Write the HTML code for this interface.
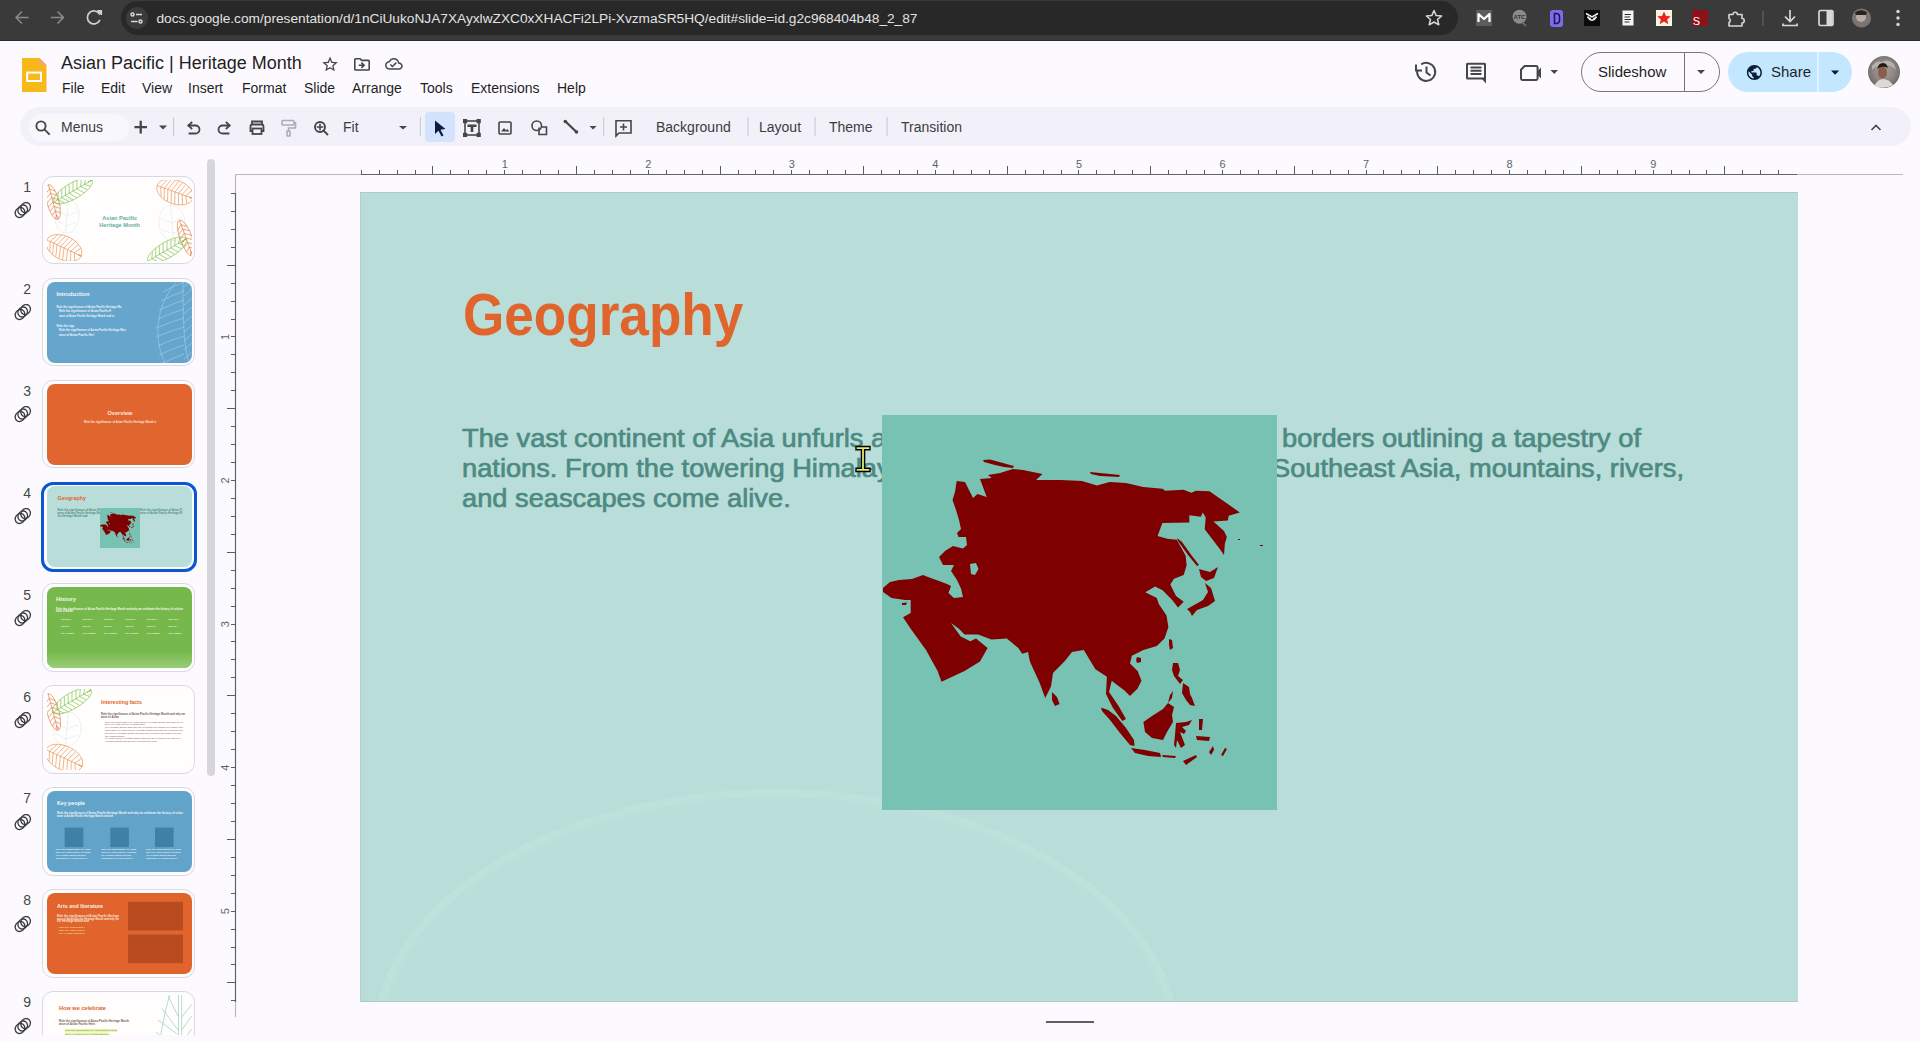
<!DOCTYPE html>
<html><head><meta charset="utf-8">
<style>
*{box-sizing:border-box;margin:0;padding:0}
html,body{width:1920px;height:1041px;overflow:hidden;background:#fcfaff;font-family:"Liberation Sans",sans-serif;position:relative}
.abs{position:absolute}
#chrome{left:0;top:0;width:1920px;height:41px;background:#3a3a3a}
#url{left:121px;top:1px;width:1337px;height:34px;border-radius:17px;background:#282828}
#urltext{left:156.5px;top:10.5px;font-size:13.7px;color:#e3e3e3;white-space:nowrap}
#hdr{left:0;top:41px;width:1920px;height:67px;background:#fcfaff}
.menu{top:80px;font-size:14px;color:#1f1f1f;white-space:nowrap}
#doctitle{left:61px;top:53px;font-size:18px;color:#1f1f1f;white-space:nowrap}
#toolbar{left:20px;top:107px;width:1891px;height:39px;border-radius:19.5px;background:#f2f1f9}
#search{left:29px;top:113.5px;width:100px;height:27.5px;border-radius:13px;background:#f8f7fc}
.tb{top:119px;font-size:14px;color:#3c3c3c;white-space:nowrap}
.sep{top:116px;width:1px;height:22px;background:#c7c7cc}
#slide{left:360px;top:192px;width:1438px;height:810px;background:#b9ddd8;overflow:hidden;border-top:1px solid #b2c9c8;border-bottom:1px solid #b2c9c8;border-left:1px solid #b9cccb}
#title{left:462.5px;top:279.5px;font-size:60px;font-weight:bold;color:#e0652c;white-space:nowrap;transform:scaleX(0.885);transform-origin:0 0}
.body{left:462px;font-size:25px;font-weight:normal;color:#4d8a83;white-space:nowrap;-webkit-text-stroke:0.65px #4d8a83;transform:scaleX(1.09);transform-origin:0 0}
#mapbox{left:882px;top:415px;width:395px;height:395px;background:#78c2b3}
.num{left:17px;font-size:14px;color:#444746;width:14px;text-align:right}
.thumb{left:43px;width:152px;height:87px;border-radius:10px;border:1px solid #dcdbe2;background:#fdfcff;overflow:hidden}
.thumb .in{position:absolute;left:3px;top:3px;right:3px;bottom:3px;border-radius:7px;overflow:hidden}
</style></head>
<body>
<div id="chrome" class="abs"></div><div class="abs" style="left:0;top:40px;width:1920px;height:1px;background:#2b2b2b"></div>
<div id="url" class="abs"></div>
<div id="urltext" class="abs">docs.google.com/presentation/d/1nCiUukoNJA7XAyxlwZXC0xXHACFi2LPi-XvzmaSR5HQ/edit#slide=id.g2c968404b48_2_87</div>

<div id="hdr" class="abs"></div>
<div id="doctitle" class="abs">Asian Pacific | Heritage Month</div>
<div class="abs menu" style="left:62px">File</div>
<div class="abs menu" style="left:101px">Edit</div>
<div class="abs menu" style="left:142px">View</div>
<div class="abs menu" style="left:188px">Insert</div>
<div class="abs menu" style="left:242px">Format</div>
<div class="abs menu" style="left:304px">Slide</div>
<div class="abs menu" style="left:352px">Arrange</div>
<div class="abs menu" style="left:420px">Tools</div>
<div class="abs menu" style="left:471px">Extensions</div>
<div class="abs menu" style="left:557px">Help</div>

<div id="toolbar" class="abs"></div>
<div id="search" class="abs"></div>
<svg class="abs" style="left:0;top:0" width="1920" height="1041" viewBox="0 0 1920 1041">
<!-- chrome nav -->
<g fill="none" stroke="#8a8a8a" stroke-width="1.6" stroke-linecap="round" stroke-linejoin="round">
<path d="M16.5,17.5H28M21.5,12L16,17.5L21.5,23"/>
<path d="M51.5,17.5H63M58,12L63.5,17.5L58,23"/>
</g>
<g fill="none" stroke="#d0d0d0" stroke-width="1.7" stroke-linecap="round">
<path d="M99.5,14.2A6.5,6.5 0 1 0 99.6,20.5"/>
</g>
<path d="M97.5,10.5L101.5,10.5L101.5,14.5Z" fill="#d0d0d0" stroke="#d0d0d0" stroke-width="1.2" stroke-linejoin="round"/>
<circle cx="137" cy="18" r="11" fill="#3b3b3b"/>
<g stroke="#d8d8d8" stroke-width="1.5" fill="none"><circle cx="132.5" cy="14.5" r="1.5"/><path d="M136,14.5H142"/><circle cx="140.5" cy="21.5" r="1.5"/><path d="M131,21.5H137.5"/></g>
<!-- chrome right -->
<path d="M1434,10.5L1436.2,15.6L1441.6,16L1437.5,19.5L1438.8,24.8L1434,22L1429.2,24.8L1430.5,19.5L1426.4,16L1431.8,15.6Z" fill="none" stroke="#d8d8d8" stroke-width="1.5" stroke-linejoin="round"/>
<rect x="1476" y="10" width="16" height="16" fill="#5d5d5d"/>
<path d="M1478.5,22V14L1484,19L1489.5,14V22" fill="none" stroke="#fff" stroke-width="2.2" stroke-linejoin="round"/>
<circle cx="1519.5" cy="16.8" r="7" fill="#8b8b8b"/><path d="M1522,22L1526,26" stroke="#777" stroke-width="1.5"/>
<text x="1519.5" y="19" font-size="6" fill="#333" text-anchor="middle" font-family="Liberation Sans" font-weight="bold">ATC</text>
<rect x="1550" y="10" width="13" height="17" rx="3" fill="#7d6cf0"/><path d="M1554.5,13.5V23.5H1556.5A3,3 0 0 0 1559.5,20.5V16.5A3,3 0 0 0 1556.5,13.5Z" fill="none" stroke="#1a1a4a" stroke-width="1.6"/>
<rect x="1584" y="10" width="16" height="16" fill="#0a0a0a"/><path d="M1586,13.5L1592,17L1598,13.5M1587.5,16.5Q1592,24 1596.5,16.5" fill="none" stroke="#f0f0f0" stroke-width="1.5"/><circle cx="1590" cy="18.5" r="1" fill="#f0f0f0"/><circle cx="1594" cy="18.5" r="1" fill="#f0f0f0"/>
<rect x="1622.5" y="10.5" width="11" height="15" fill="#f5f5f5"/><path d="M1624.5,14.5H1631M1624.5,17H1630M1624.5,19.5H1631M1624.5,22H1629.5" stroke="#333" stroke-width="1"/>
<rect x="1656" y="10" width="16" height="16" fill="#fbf6e4"/><path d="M1664,11.5L1666,16L1670.8,16.3L1667.2,19.4L1668.3,24.2L1664,21.6L1659.7,24.2L1660.8,19.4L1657.2,16.3L1662,16Z" fill="#e8231f"/>
<rect x="1692" y="10" width="16" height="16" fill="#8c1217"/><text x="1696.5" y="24.5" font-size="11" fill="#fff" text-anchor="middle" font-family="Liberation Sans">S</text>
<path d="M1729,14.5H1733A2.2,2.2 0 0 1 1737.4,14.5H1742V18.5A2.2,2.2 0 0 1 1742,23V26H1729V22.5A2.2,2.2 0 0 0 1729,18.5Z" fill="none" stroke="#d6d6d6" stroke-width="1.6" stroke-linejoin="round"/>
<path d="M1763,11V26" stroke="#6a6a6a" stroke-width="1"/>
<g fill="none" stroke="#d8d8d8" stroke-width="1.7"><path d="M1790,10V21M1785,16.5L1790,21.5L1795,16.5M1783,23.5V25.5H1797V23.5"/></g>
<rect x="1819" y="10.5" width="14" height="15" rx="1.5" fill="none" stroke="#d8d8d8" stroke-width="1.7"/><rect x="1826.5" y="11" width="6" height="14" fill="#d8d8d8"/>
<circle cx="1861.5" cy="18" r="9.5" fill="#7c7472"/><circle cx="1861" cy="17" r="5" fill="#b9aca4"/><path d="M1855,12.5Q1861,8 1867,12.5L1866,15L1856,15Z" fill="#2a2320"/>
<g fill="#d8d8d8"><circle cx="1898" cy="11.5" r="1.7"/><circle cx="1898" cy="18" r="1.7"/><circle cx="1898" cy="24.5" r="1.7"/></g>

<!-- slides logo -->
<path d="M22,58H39.5L46.5,65V92H22Z" fill="#f6b919"/>
<path d="M39.5,58L46.5,65H39.5Z" fill="#f1a37b"/>
<rect x="27.2" y="72.6" width="13.8" height="8.4" fill="none" stroke="#fff" stroke-width="2"/>
<!-- star / folder / cloud -->
<path transform="translate(320.75,55.05) scale(0.775)" fill="#444746" d="M22 9.24l-7.19-.62L12 2 9.19 8.63 2 9.24l5.46 4.73L5.82 21 12 17.27 18.18 21l-1.63-7.03L22 9.24zM12 15.4l-3.76 2.27 1-4.28-3.32-2.88 4.38-.38L12 6.1l1.71 4.04 4.38.38-3.32 2.88 1 4.28L12 15.4z"/>
<path transform="translate(352.4,54.8) scale(0.8)" fill="#444746" d="M20 6h-8l-2-2H4c-1.1 0-1.99.9-1.99 2L2 18c0 1.1.9 2 2 2h16c1.1 0 2-.9 2-2V8c0-1.1-.9-2-2-2zm0 12H4V6h5.17l2 2H20v10zm-7.84-6H8v2h4.16l-1.59 1.59L11.99 17 16 13.01 11.99 9l-1.41 1.41L12.160 12z"/>
<path transform="translate(385,55) scale(0.74)" fill="#444746" d="M19.35 10.04C18.67 6.59 15.64 4 12 4 9.11 4 6.6 5.64 5.35 8.04 2.34 8.360 0 10.91 0 14c0 3.31 2.69 6 6 6h13c2.76 0 5-2.24 5-5 0-2.64-2.05-4.78-4.65-4.96zM19 18H6c-2.21 0-4-1.79-4-4 0-2.05 1.53-3.76 3.56-3.970l1.07-.11.5-.95C8.08 7.14 9.94 6 12 6c2.62 0 4.88 1.86 5.39 4.43l.3 1.5 1.53.11c1.56.1 2.78 1.41 2.78 2.96 0 1.65-1.35 3-3 3zm-9-3.82l-2.09-2.09L6.5 13.5 10 17l6.01-6.01-1.41-1.41z"/>

<!-- header right -->
<g fill="none" stroke="#444746" stroke-width="2">
<path d="M1417.3,70.5A9,9 0 1 0 1421.2,64.4"/>
<path d="M1426.5,66.5V72.5L1430.5,75.5"/>
<rect x="1467" y="63.8" width="18" height="14.6" rx="0.5"/>
<path d="M1470.5,67.5H1481.5M1470.5,70.8H1481.5M1470.5,74.1H1481.5"/>
<path d="M1521,69.8L1524.5,66H1536.2Q1537.6,66 1537.6,67.4V78.6Q1537.6,80 1536.2,80H1522.4Q1521,80 1521,78.6Z"/>
</g>
<path d="M1416,64.5V70.5H1422" fill="none" stroke="#444746" stroke-width="2"/>
<path d="M1484,78L1486,78V83.5L1481,78Z" fill="#444746"/>
<path d="M1537.6,71L1541,67.5V78.5L1537.6,75Z" fill="#444746"/>
<path d="M1550.5,70H1558L1554.25,74Z" fill="#444746"/>
<!-- slideshow -->
<rect x="1581.5" y="52.5" width="138" height="39" rx="19.5" fill="none" stroke="#747775" stroke-width="1"/>
<path d="M1684.5,52.5V91.5" stroke="#747775" stroke-width="1"/>
<path d="M1697,70H1705L1701,74Z" fill="#444746"/>
<!-- share -->
<rect x="1728" y="52" width="124" height="40" rx="20" fill="#c2e7ff"/>
<path d="M1818,52V92" stroke="#f7f9fd" stroke-width="1.2"/>
<path transform="translate(1745.4,63.5) scale(0.75)" fill="#0b1d33" d="M12 2C6.48 2 2 6.480 2 12s4.48 10 10 10 10-4.48 10-10S17.52 2 12 2zm-1 17.93c-3.95-.49-7-3.85-7-7.93 0-.62.08-1.21.21-1.79L9 15v1c0 1.1.9 2 2 2v1.93zm6.9-2.54c-.26-.81-1-1.39-1.9-1.39h-1v-3c0-.55-.45-1-1-1H8v-2h2c.55 0 1-.45 1-1V7h2c1.1 0 2-.9 2-2v-.41c2.93 1.19 5 4.06 5 7.41 0 2.08-.8 3.970-2.1 5.39z"/>
<path d="M1831,70.6H1839.2L1835.1,74.8Z" fill="#0b1d33"/>
<!-- avatar -->
<defs><radialGradient id="av" cx="50%" cy="45%" r="55%"><stop offset="0" stop-color="#a9a29d"/><stop offset="0.6" stop-color="#8d8682"/><stop offset="1" stop-color="#6e6864"/></radialGradient></defs>
<circle cx="1884" cy="72" r="16" fill="url(#av)"/>
<path d="M1872,66Q1876,60 1882,62Q1888,58 1894,64L1896,70Q1890,64 1884,66Q1878,64 1872,70Z" fill="#c8c3bf" opacity="0.7"/>
<ellipse cx="1882.5" cy="72.5" rx="4.5" ry="6" fill="#8a5e4c"/>
<path d="M1877.5,69Q1878,63 1883,63Q1888,63.5 1887.5,68.5L1886,67Q1882,66 1879,68Z" fill="#231c1a"/>
<path d="M1874,86Q1878,79 1883,79Q1889,79 1893,85Q1884,90 1874,86Z" fill="#dcd8d4"/>
<!-- toolbar -->
<g fill="none" stroke="#444746" stroke-width="1.9" stroke-linecap="square">
<circle cx="41" cy="126" r="4.6"/><path d="M44.6,129.6L49,134"/>
<path d="M140.7,122V132.3M135.6,127.2H145.8" stroke-width="2.3"/>
<path d="M188.5,125.5H195.5A4,4 0 0 1 195.5,133.5H189.5" stroke-width="1.8"/>
<path d="M191.5,122.5L188.5,125.5L191.5,128.5" stroke-width="1.8"/>
<path d="M229.5,125.5H222.5A4,4 0 0 0 222.5,133.5H228.5" stroke-width="1.8"/>
<path d="M226.5,122.5L229.5,125.5L226.5,128.5" stroke-width="1.8"/>
<circle cx="320" cy="127" r="5"/><path d="M323.7,130.7L327.3,134.3"/><path d="M320,124.5V129.5M317.5,127H322.5" stroke-width="1.6"/>
</g>
<path d="M159,125.5H167L163,129.5Z" fill="#444746"/>
<path d="M173.6,117.5V136" stroke="#c4c7c5" stroke-width="1"/>
<g fill="none" stroke="#444746" stroke-width="1.8"><path d="M252,124.5V121.5H262V124.5"/><path d="M252.5,131H250.5V126.5Q250.5,124.5 252.5,124.5H261.5Q263.5,124.5 263.5,126.5V131H261.5"/><rect x="252.5" y="128.5" width="9" height="5.5"/></g>
<g fill="none" stroke="#a9acb0" stroke-width="1.6"><rect x="282" y="120.5" width="12" height="4.5" rx="0.8"/><path d="M294,122.8H295.5V128H288.5V131"/><rect x="287" y="131" width="3" height="5" rx="0.5"/></g>
<path d="M399,126H407L403,129.5Z" fill="#444746"/>
<path d="M420.4,117V136" stroke="#c4c7c5" stroke-width="1"/>
<rect x="425" y="112" width="30" height="30" rx="4" fill="#d3e3fd"/>
<path d="M435,120.5L445.5,129L440.5,129.8L443.5,135.5L441.5,136.5L438.5,130.8L435,134Z" fill="#0b1d45"/>
<g fill="none" stroke="#444746" stroke-width="1.6">
<rect x="465" y="121" width="14" height="14"/>
<rect x="532" y="121" width="9.5" height="9.5" rx="4.75"/>
<path d="M539,127.5V134.5H546.5V127H541.5"/>
<rect x="499" y="122" width="12" height="12" rx="1"/>
<path d="M616,120.8H631V133H619L616,136Z"/>
<path d="M623.5,123.5V130.5M620,127H627"/>
</g>
<g fill="#444746"><rect x="463" y="119" width="4.2" height="4.2"/><rect x="476.6" y="119" width="4.2" height="4.2"/><rect x="463" y="132.8" width="4.2" height="4.2"/><rect x="476.6" y="132.8" width="4.2" height="4.2"/>
<path d="M467.5,124.5H476.5V127H473.3V132H470.7V127H467.5Z"/>
<path d="M501,131.5L504,128L506,130.3L507.3,129L509.5,131.5Z"/>
</g>
<path d="M565.5,121.5L576.5,132" stroke="#444746" stroke-width="2.3"/>
<circle cx="565.3" cy="121.5" r="1.8" fill="#444746"/><circle cx="576.5" cy="132" r="1.8" fill="#444746"/>
<path d="M589.5,126H596.6L593,129.5Z" fill="#444746"/>
<path d="M603.7,117V136" stroke="#c4c7c5" stroke-width="1"/>
<path d="M748,117V136M815,117V136M887,117V136" stroke="#c4c7c5" stroke-width="1"/>
<path d="M1871.5,130L1876,125.5L1880.5,130" fill="none" stroke="#444746" stroke-width="1.6"/>
</svg>

<div class="abs tb" style="left:61px">Menus</div>
<div class="abs tb" style="left:343px">Fit</div>
<div class="abs tb" style="left:656px">Background</div>
<div class="abs tb" style="left:759px">Layout</div>
<div class="abs tb" style="left:829px">Theme</div>
<div class="abs tb" style="left:901px">Transition</div>

<!-- rulers -->
<svg class="abs" style="left:0;top:0" width="1920" height="1041">
<path d="M361,174.5H1797M235.5,193V1002" stroke="#606368" stroke-width="1.2" fill="none"/><path d="M235.5,1002V1017" stroke="#b9b9c0" stroke-width="1.2" fill="none"/>
<path d="M235,174.5H361M235.5,174V193" stroke="#b9b9c0" stroke-width="1.2" fill="none"/>
<path d="M1797,174.5H1903" stroke="#b8b8c0" stroke-width="1.2" fill="none"/>
<path d="M361.5,170V175M379.5,170V175M397.5,170V175M415.5,170V175M432.5,166V175M450.5,170V175M468.5,170V175M486.5,170V175M504.5,170V175M522.5,170V175M540.5,170V175M558.5,170V175M576.5,166V175M594.5,170V175M612.5,170V175M630.5,170V175M648.5,170V175M666.5,170V175M684.5,170V175M702.5,170V175M720.5,166V175M738.5,170V175M755.5,170V175M773.5,170V175M791.5,170V175M809.5,170V175M827.5,170V175M845.5,170V175M863.5,166V175M881.5,170V175M899.5,170V175M917.5,170V175M935.5,170V175M953.5,170V175M971.5,170V175M989.5,170V175M1007.5,166V175M1025.5,170V175M1043.5,170V175M1061.5,170V175M1078.5,170V175M1096.5,170V175M1114.5,170V175M1132.5,170V175M1150.5,166V175M1168.5,170V175M1186.5,170V175M1204.5,170V175M1222.5,170V175M1240.5,170V175M1258.5,170V175M1276.5,170V175M1294.5,166V175M1312.5,170V175M1330.5,170V175M1348.5,170V175M1366.5,170V175M1383.5,170V175M1401.5,170V175M1419.5,170V175M1437.5,166V175M1455.5,170V175M1473.5,170V175M1491.5,170V175M1509.5,170V175M1527.5,170V175M1545.5,170V175M1563.5,170V175M1581.5,166V175M1599.5,170V175M1617.5,170V175M1635.5,170V175M1653.5,170V175M1671.5,170V175M1689.5,170V175M1706.5,170V175M1724.5,166V175M1742.5,170V175M1760.5,170V175M1778.5,170V175" stroke="#5a5d62" stroke-width="1" fill="none"/>
<path d="M231,193.5H236M231,211.5H236M231,229.5H236M231,247.5H236M227,265.5H236M231,283.5H236M231,301.5H236M231,319.5H236M231,336.5H236M231,354.5H236M231,372.5H236M231,390.5H236M227,408.5H236M231,426.5H236M231,444.5H236M231,462.5H236M231,480.5H236M231,498.5H236M231,516.5H236M231,534.5H236M227,552.5H236M231,570.5H236M231,588.5H236M231,606.5H236M231,624.5H236M231,641.5H236M231,659.5H236M231,677.5H236M227,695.5H236M231,713.5H236M231,731.5H236M231,749.5H236M231,767.5H236M231,785.5H236M231,803.5H236M231,821.5H236M227,839.5H236M231,857.5H236M231,875.5H236M231,893.5H236M231,911.5H236M231,929.5H236M231,947.5H236M231,964.5H236M227,982.5H236M231,1000.5H236" stroke="#5a5d62" stroke-width="1" fill="none"/>
<g font-family="Liberation Sans" font-size="11" fill="#5f6368" text-anchor="middle"><text x="504.8" y="168">1</text><text x="648.3" y="168">2</text><text x="791.9" y="168">3</text><text x="935.4" y="168">4</text><text x="1079.0" y="168">5</text><text x="1222.5" y="168">6</text><text x="1366.1" y="168">7</text><text x="1509.6" y="168">8</text><text x="1653.2" y="168">9</text><text transform="translate(229,337.0) rotate(-90)" x="0" y="0">1</text><text transform="translate(229,480.5) rotate(-90)" x="0" y="0">2</text><text transform="translate(229,624.1) rotate(-90)" x="0" y="0">3</text><text transform="translate(229,767.6) rotate(-90)" x="0" y="0">4</text><text transform="translate(229,911.1) rotate(-90)" x="0" y="0">5</text></g>
</svg>

<div class="abs" style="left:0;top:150px;width:200px;height:885px;overflow:hidden"><div class="abs" style="left:0;top:-150px;width:200px;height:1041px"><div class="abs num" style="top:178.7px">1</div><svg class="abs" style="left:13px;top:202.1px" width="20" height="18" viewBox="0 0 20 18"><g fill="none" stroke="#3c3c3c" stroke-width="1.3"><ellipse cx="7" cy="10.5" rx="4.6" ry="5.2" transform="rotate(35 7 10.5)"/><ellipse cx="9.7" cy="8" rx="4.6" ry="5.2" transform="rotate(35 9.7 8)"/><ellipse cx="12.6" cy="5.5" rx="4.6" ry="5.2" transform="rotate(35 12.6 5.5)"/></g></svg><div class="abs" style="left:42.4px;top:175.6px;width:152.5px;height:88.5px;border:1px solid #dad9e0;border-radius:11px;background:#fdfcff"></div><svg class="abs" style="left:46.5px;top:179.6px" width="145" height="81" viewBox="0 0 145 81"><clipPath id="c0"><rect width="145" height="81" rx="8"/></clipPath><g clip-path="url(#c0)"><rect width="145" height="81" fill="#fffefd"/><g transform="rotate(5 20 36)" fill="none" stroke="#a9c8d6" stroke-width="0.5" stroke-dasharray="0.6 0.7"><ellipse cx="20" cy="36" rx="12" ry="17"/><path d="M20,19V53M10.399999999999999,30.9L20,36L29.6,30.9M10.399999999999999,41.1L20,46.2L29.6,41.1"/></g><g transform="rotate(-5 125 43)" fill="none" stroke="#a9c8d6" stroke-width="0.5" stroke-dasharray="0.6 0.7"><ellipse cx="125" cy="43" rx="13" ry="18"/><path d="M125,25V61M114.6,37.6L125,43L135.4,37.6M114.6,48.4L125,53.8L135.4,48.4"/></g><g transform="translate(6,22) rotate(75)" stroke="#e07a44" fill="none" stroke-width="0.6"><ellipse cx="0" cy="0" rx="18" ry="6"/><path d="M-18,0H18"/><path d="M-13.5,0L-9.9,-4.9M-13.5,0L-9.9,4.9M-9.0,0L-5.4,-5.6M-9.0,0L-5.4,5.6M-4.5,0L-0.9,-5.8M-4.5,0L-0.9,5.8M0.0,0L3.6,-5.7M0.0,0L3.6,5.7M4.5,0L8.1,-5.2M4.5,0L8.1,5.2M9.0,0L12.6,-4.2M9.0,0L12.6,4.2M13.5,0L17.1,-1.8M13.5,0L17.1,1.8"/></g><g transform="translate(26,11) rotate(-30)" stroke="#7cc04a" fill="none" stroke-width="0.6"><ellipse cx="0" cy="0" rx="22" ry="8"/><path d="M-22,0H22"/><path d="M-17.6,0L-13.2,-6.2M-17.6,0L-13.2,6.2M-13.2,0L-8.8,-7.1M-13.2,0L-8.8,7.1M-8.8,0L-4.4,-7.6M-8.8,0L-4.4,7.6M-4.4,0L0.0,-7.8M-4.4,0L0.0,7.8M0.0,0L4.4,-7.6M0.0,0L4.4,7.6M4.4,0L8.8,-7.1M4.4,0L8.8,7.1M8.8,0L13.2,-6.2M8.8,0L13.2,6.2M13.2,0L17.6,-4.7M13.2,0L17.6,4.7M17.6,0L22.0,-0.0M17.6,0L22.0,0.0"/></g><g transform="translate(17,68) rotate(25)" stroke="#e8904e" fill="none" stroke-width="0.6"><ellipse cx="0" cy="0" rx="19" ry="12"/><path d="M-19,0H19"/><path d="M-15.2,0L-11.4,-9.3M-15.2,0L-11.4,9.3M-11.4,0L-7.6,-10.7M-11.4,0L-7.6,10.7M-7.6,0L-3.8,-11.4M-7.6,0L-3.8,11.4M-3.8,0L-0.0,-11.6M-3.8,0L-0.0,11.6M0.0,0L3.8,-11.4M0.0,0L3.8,11.4M3.8,0L7.6,-10.7M3.8,0L7.6,10.7M7.6,0L11.4,-9.3M7.6,0L11.4,9.3M11.4,0L15.2,-7.0M11.4,0L15.2,7.0M15.2,0L19.0,-0.0M15.2,0L19.0,0.0"/></g><g transform="translate(128,12) rotate(20)" stroke="#e8904e" fill="none" stroke-width="0.6"><ellipse cx="0" cy="0" rx="19" ry="12"/><path d="M-19,0H19"/><path d="M-15.2,0L-11.4,-9.3M-15.2,0L-11.4,9.3M-11.4,0L-7.6,-10.7M-11.4,0L-7.6,10.7M-7.6,0L-3.8,-11.4M-7.6,0L-3.8,11.4M-3.8,0L-0.0,-11.6M-3.8,0L-0.0,11.6M0.0,0L3.8,-11.4M0.0,0L3.8,11.4M3.8,0L7.6,-10.7M3.8,0L7.6,10.7M7.6,0L11.4,-9.3M7.6,0L11.4,9.3M11.4,0L15.2,-7.0M11.4,0L15.2,7.0M15.2,0L19.0,-0.0M15.2,0L19.0,0.0"/></g><g transform="translate(139,58) rotate(70)" stroke="#e07a44" fill="none" stroke-width="0.6"><ellipse cx="0" cy="0" rx="19" ry="6"/><path d="M-19,0H19"/><path d="M-14.2,0L-10.4,-4.9M-14.2,0L-10.4,4.9M-9.5,0L-5.7,-5.6M-9.5,0L-5.7,5.6M-4.8,0L-0.9,-5.8M-4.8,0L-0.9,5.8M0.0,0L3.8,-5.7M0.0,0L3.8,5.7M4.8,0L8.6,-5.2M4.8,0L8.6,5.2M9.5,0L13.3,-4.2M9.5,0L13.3,4.2M14.2,0L18.1,-1.8M14.2,0L18.1,1.8"/></g><g transform="translate(120,70) rotate(-30)" stroke="#7cc04a" fill="none" stroke-width="0.6"><ellipse cx="0" cy="0" rx="22" ry="8"/><path d="M-22,0H22"/><path d="M-17.6,0L-13.2,-6.2M-17.6,0L-13.2,6.2M-13.2,0L-8.8,-7.1M-13.2,0L-8.8,7.1M-8.8,0L-4.4,-7.6M-8.8,0L-4.4,7.6M-4.4,0L0.0,-7.8M-4.4,0L0.0,7.8M0.0,0L4.4,-7.6M0.0,0L4.4,7.6M4.4,0L8.8,-7.1M4.4,0L8.8,7.1M8.8,0L13.2,-6.2M8.8,0L13.2,6.2M13.2,0L17.6,-4.7M13.2,0L17.6,4.7M17.6,0L22.0,-0.0M17.6,0L22.0,0.0"/></g><text x="72.7" y="39.5" font-size="5.6" fill="#62ae9f" text-anchor="middle" font-family="Liberation Sans" font-weight="bold">Asian Pacific</text><text x="72.7" y="46.5" font-size="5.6" fill="#62ae9f" text-anchor="middle" font-family="Liberation Sans" font-weight="bold">Heritage Month</text></g></svg><div class="abs num" style="top:280.7px">2</div><svg class="abs" style="left:13px;top:304.1px" width="20" height="18" viewBox="0 0 20 18"><g fill="none" stroke="#3c3c3c" stroke-width="1.3"><ellipse cx="7" cy="10.5" rx="4.6" ry="5.2" transform="rotate(35 7 10.5)"/><ellipse cx="9.7" cy="8" rx="4.6" ry="5.2" transform="rotate(35 9.7 8)"/><ellipse cx="12.6" cy="5.5" rx="4.6" ry="5.2" transform="rotate(35 12.6 5.5)"/></g></svg><div class="abs" style="left:42.4px;top:277.6px;width:152.5px;height:88.5px;border:1px solid #dad9e0;border-radius:11px;background:#fdfcff"></div><svg class="abs" style="left:46.5px;top:281.6px" width="145" height="81" viewBox="0 0 145 81"><clipPath id="c1"><rect width="145" height="81" rx="8"/></clipPath><g clip-path="url(#c1)"><rect width="145" height="81" fill="#66a5cc"/><text x="9.5" y="13.7" font-size="5" fill="#f4f8fb" font-family="Liberation Sans" font-weight="bold" textLength="33" lengthAdjust="spacingAndGlyphs">Introduction</text><text x="9.5" y="25.5" font-size="2.6" fill="#eef5fa" opacity="1" font-family="Liberation Sans" font-weight="bold" textLength="65" lengthAdjust="spacingAndGlyphs">Role the significance of Asian Pacific Heritage Mo</text><text x="12" y="30.0" font-size="2.6" fill="#eef5fa" opacity="1" font-family="Liberation Sans" font-weight="bold" textLength="52" lengthAdjust="spacingAndGlyphs">Role the significance of Asian Pacific H</text><text x="12" y="34.5" font-size="2.6" fill="#eef5fa" opacity="1" font-family="Liberation Sans" font-weight="bold" textLength="55" lengthAdjust="spacingAndGlyphs">ance of Asian Pacific Heritage Month and w</text><text x="9.5" y="44.5" font-size="2.6" fill="#eef5fa" opacity="1" font-family="Liberation Sans" font-weight="bold" textLength="18" lengthAdjust="spacingAndGlyphs">Role the sign</text><text x="12" y="49.0" font-size="2.6" fill="#eef5fa" opacity="1" font-family="Liberation Sans" font-weight="bold" textLength="67" lengthAdjust="spacingAndGlyphs">Role the significance of Asian Pacific Heritage Mon</text><text x="12" y="53.5" font-size="2.6" fill="#eef5fa" opacity="1" font-family="Liberation Sans" font-weight="bold" textLength="35" lengthAdjust="spacingAndGlyphs">ance of Asian Pacific Heri</text><g stroke="#a6d0f0" stroke-width="0.6" fill="none"><path d="M130,-1C112,20 104,50 118,82"/><path d="M136,-1C136,30 136,60 142,82"/><path d="M116,10Q127,4 137,0"/><path d="M137,5L146,-3"/><path d="M114,19Q126,13 137,9"/><path d="M137,14L146,6"/><path d="M112,28Q125,22 137,18"/><path d="M137,23L146,15"/><path d="M111,37Q124,31 137,27"/><path d="M137,32L146,24"/><path d="M109,46Q123,40 137,36"/><path d="M137,41L146,33"/><path d="M109,55Q123,49 137,45"/><path d="M137,50L146,42"/><path d="M111,64Q124,58 137,54"/><path d="M137,59L146,51"/><path d="M112,73Q125,67 137,63"/><path d="M137,68L146,60"/><path d="M114,82Q126,76 137,72"/><path d="M137,77L146,69"/></g></g></svg><div class="abs num" style="top:382.6px">3</div><svg class="abs" style="left:13px;top:406.0px" width="20" height="18" viewBox="0 0 20 18"><g fill="none" stroke="#3c3c3c" stroke-width="1.3"><ellipse cx="7" cy="10.5" rx="4.6" ry="5.2" transform="rotate(35 7 10.5)"/><ellipse cx="9.7" cy="8" rx="4.6" ry="5.2" transform="rotate(35 9.7 8)"/><ellipse cx="12.6" cy="5.5" rx="4.6" ry="5.2" transform="rotate(35 12.6 5.5)"/></g></svg><div class="abs" style="left:42.4px;top:379.5px;width:152.5px;height:88.5px;border:1px solid #dad9e0;border-radius:11px;background:#fdfcff"></div><svg class="abs" style="left:46.5px;top:383.5px" width="145" height="81" viewBox="0 0 145 81"><clipPath id="c2"><rect width="145" height="81" rx="8"/></clipPath><g clip-path="url(#c2)"><rect width="145" height="81" fill="#e0652f"/><text x="73" y="31" font-size="4.8" fill="#fbe8de" text-anchor="middle" font-family="Liberation Sans" font-weight="bold" textLength="25" lengthAdjust="spacingAndGlyphs">Overview</text><text x="37" y="38.5" font-size="2.6" fill="#fbe3d6" opacity="1" font-family="Liberation Sans" font-weight="bold" textLength="72" lengthAdjust="spacingAndGlyphs">Role the significance of Asian Pacific Heritage Month a</text></g></svg><div class="abs num" style="top:484.6px">4</div><svg class="abs" style="left:13px;top:508.0px" width="20" height="18" viewBox="0 0 20 18"><g fill="none" stroke="#3c3c3c" stroke-width="1.3"><ellipse cx="7" cy="10.5" rx="4.6" ry="5.2" transform="rotate(35 7 10.5)"/><ellipse cx="9.7" cy="8" rx="4.6" ry="5.2" transform="rotate(35 9.7 8)"/><ellipse cx="12.6" cy="5.5" rx="4.6" ry="5.2" transform="rotate(35 12.6 5.5)"/></g></svg><div class="abs" style="left:41px;top:481.5px;width:156px;height:90px;border:3px solid #0b57d0;border-radius:12px"></div><svg class="abs" style="left:46.5px;top:485.5px" width="145" height="81" viewBox="0 0 145 81"><clipPath id="c3"><rect width="145" height="81" rx="8"/></clipPath><g clip-path="url(#c3)"><rect width="145" height="81" fill="#b9ddd8"/><text x="10.5" y="14" font-size="5.4" fill="#e0652c" font-family="Liberation Sans" font-weight="bold" textLength="28.5" lengthAdjust="spacingAndGlyphs">Geography</text><text x="10.5" y="25" font-size="2.6" fill="#4e8c84" opacity="1" font-family="Liberation Sans" font-weight="bold" textLength="43" lengthAdjust="spacingAndGlyphs">Role the significance of Asian Pa</text><text x="10.5" y="28" font-size="2.6" fill="#4e8c84" opacity="1" font-family="Liberation Sans" font-weight="bold" textLength="43" lengthAdjust="spacingAndGlyphs">ance of Asian Pacific Heritage Mo</text><text x="10.5" y="31" font-size="2.6" fill="#4e8c84" opacity="1" font-family="Liberation Sans" font-weight="bold" textLength="30" lengthAdjust="spacingAndGlyphs">ific Heritage Month and</text><text x="93" y="25" font-size="2.6" fill="#4e8c84" opacity="1" font-family="Liberation Sans" font-weight="bold" textLength="42" lengthAdjust="spacingAndGlyphs">Role the significance of Asian P</text><text x="93" y="28" font-size="2.6" fill="#4e8c84" opacity="1" font-family="Liberation Sans" font-weight="bold" textLength="42" lengthAdjust="spacingAndGlyphs">ance of Asian Pacific Heritage M</text><rect x="53" y="22" width="40" height="40" fill="#78c2b3"/><g transform="translate(53,22) scale(0.1013) translate(-882,-415)" fill="#7f0000"><path fill-rule="evenodd" d="M883.0,588.0 L890.0,582.0 L899.0,580.0 L912.0,579.0 L923.0,575.0 L928.0,577.0 L939.0,581.0 L947.0,584.0 L951.0,586.0 L948.5,593.0 L954.0,598.0 L963.0,597.0 L961.0,588.5 L957.0,580.0 L951.0,571.0 L954.0,565.0 L943.0,565.0 L939.0,557.0 L945.0,551.0 L953.0,546.0 L963.0,548.5 L967.0,545.0 L966.0,537.0 L958.5,537.0 L957.0,533.0 L961.0,529.0 L959.0,520.0 L956.0,510.0 L952.5,500.0 L955.0,492.0 L956.7,481.0 L965.0,482.0 L973.0,498.0 L977.5,494.0 L986.7,497.0 L980.0,479.0 L991.7,478.0 L988.0,475.0 L1000.0,473.0 L1013.0,469.0 L1023.0,470.0 L1042.5,474.0 L1036.0,480.0 L1061.0,480.0 L1082.0,481.0 L1097.0,485.5 L1109.6,482.1 L1126.0,483.0 L1143.2,486.9 L1162.4,488.8 L1165.3,490.7 L1183.6,489.8 L1191.3,492.7 L1196.0,490.7 L1209.5,491.2 L1239.8,512.4 L1228.7,515.7 L1227.8,520.5 L1213.4,521.5 L1224.0,531.0 L1226.8,537.0 L1224.9,543.6 L1224.0,555.0 L1220.0,549.3 L1204.7,529.2 L1205.7,517.6 L1202.8,512.4 L1200.9,516.7 L1189.3,515.2 L1189.3,522.4 L1162.4,522.9 L1157.6,535.9 L1167.2,538.8 L1176.8,539.7 L1185.7,555.7 L1186.6,565.3 L1183.7,575.0 L1174.0,578.7 L1170.3,584.5 L1176.0,596.0 L1183.7,601.8 L1178.0,607.5 L1172.2,600.0 L1162.6,590.2 L1155.0,586.4 L1145.3,592.2 L1156.8,598.0 L1158.8,604.0 L1166.5,615.4 L1168.4,627.0 L1164.5,638.4 L1156.8,646.0 L1143.4,650.0 L1131.9,655.7 L1130.0,663.4 L1137.6,671.0 L1141.5,680.7 L1137.6,688.4 L1130.0,696.0 L1124.2,690.3 L1116.5,684.5 L1111.7,680.7 L1109.0,692.0 L1118.4,705.7 L1126.0,719.0 L1122.3,721.0 L1112.7,707.6 L1106.0,694.0 L1106.9,676.8 L1095.4,669.2 L1083.8,650.0 L1072.0,652.0 L1064.4,661.5 L1053.0,673.0 L1051.0,686.5 L1045.2,698.0 L1039.5,682.6 L1029.9,661.5 L1028.0,652.0 L1022.2,653.8 L1018.3,648.0 L1006.8,638.4 L991.4,639.4 L978.0,634.6 L964.5,634.6 L958.8,628.8 L951.0,623.0 L960.7,636.5 L970.3,641.3 L976.0,638.4 L987.6,648.0 L980.0,661.5 L964.5,671.0 L941.5,681.7 L937.6,671.0 L926.0,650.0 L910.7,628.8 L903.0,617.3 L910.7,613.0 L910.7,600.0 L905.0,600.0 L891.5,598.0 L883.0,592.0ZM970.0,564.0 L976.0,563.0 L978.5,569.0 L975.0,575.0 L971.0,574.0ZM983.0,460.0 L990.0,459.5 L1003.0,463.0 L1010.0,465.0 L1014.0,466.0 L1013.0,468.0 L1004.0,467.0 L995.0,465.0 L984.0,462.0ZM1090.0,472.0 L1100.0,473.0 L1120.0,475.0 L1119.0,477.0 L1100.0,476.0 L1091.0,474.0ZM1177.0,538.0 L1182.0,542.0 L1192.0,556.0 L1199.0,565.0 L1197.0,566.0 L1188.0,555.0 L1178.0,541.0ZM1199.0,569.0 L1210.0,572.0 L1218.0,567.0 L1214.0,578.0 L1206.0,581.0 L1201.0,577.0ZM1205.0,583.0 L1211.0,588.0 L1215.0,601.0 L1208.0,606.0 L1197.0,610.0 L1192.0,616.0 L1190.0,612.0 L1187.0,609.0 L1196.0,604.0 L1203.0,600.0 L1208.0,592.0ZM1169.0,639.0 L1172.0,640.0 L1173.0,648.0 L1170.0,650.0 L1169.0,645.0ZM1137.0,657.0 L1141.0,658.0 L1141.0,662.0 L1137.0,663.0 L1136.0,660.0ZM1052.0,692.0 L1057.0,697.0 L1059.6,704.0 L1055.0,706.0 L1052.0,700.0ZM1101.0,707.6 L1108.0,710.0 L1116.0,716.0 L1126.0,728.0 L1134.0,740.0 L1134.5,746.0 L1130.0,745.0 L1120.0,733.0 L1110.0,720.0 L1102.0,711.0ZM1131.0,748.0 L1145.0,750.0 L1160.0,753.0 L1161.0,757.0 L1148.0,756.0 L1135.0,753.0ZM1162.0,755.0 L1176.0,756.0 L1175.0,758.0 L1163.0,757.0ZM1183.0,761.0 L1196.0,755.0 L1197.0,757.0 L1186.0,765.0ZM1143.4,722.0 L1152.0,716.0 L1163.0,709.0 L1168.0,703.0 L1174.0,707.0 L1172.0,715.0 L1173.0,722.0 L1167.0,732.0 L1163.0,740.0 L1152.0,738.0 L1145.0,732.0ZM1176.0,723.0 L1186.0,722.0 L1192.0,720.0 L1189.0,725.0 L1182.0,727.0 L1186.0,731.0 L1184.0,734.0 L1180.0,732.0 L1185.0,745.0 L1181.0,748.0 L1177.0,740.0 L1176.0,748.0 L1174.0,745.0 L1175.0,735.0ZM1173.0,663.0 L1178.0,663.0 L1180.0,670.0 L1178.0,676.0 L1183.0,680.0 L1180.0,684.0 L1174.0,676.0 L1172.0,670.0ZM1183.0,683.0 L1189.0,687.0 L1190.0,694.0 L1192.0,698.0 L1195.0,706.0 L1190.0,705.0 L1186.0,700.0 L1182.0,693.0ZM1170.0,695.0 L1173.0,691.0 L1172.0,698.0 L1168.0,703.0ZM1199.0,719.0 L1203.0,719.0 L1202.0,730.0 L1199.0,730.0ZM1196.0,736.0 L1210.0,737.0 L1209.0,741.0 L1197.0,740.0ZM1209.0,752.0 L1213.0,746.0 L1214.0,750.0 L1211.0,755.0ZM1225.0,748.0 L1221.0,755.0 L1223.0,756.0 L1227.0,749.0ZM902.0,603.0 L907.0,602.5 L906.0,605.0 L902.0,605.0ZM1238.0,539.0 L1240.0,539.0 L1240.0,540.0 L1238.0,540.0ZM1260.0,545.0 L1263.0,545.0 L1263.0,546.0 L1260.0,546.0Z"/></g></g></svg><div class="abs num" style="top:586.5px">5</div><svg class="abs" style="left:13px;top:609.9px" width="20" height="18" viewBox="0 0 20 18"><g fill="none" stroke="#3c3c3c" stroke-width="1.3"><ellipse cx="7" cy="10.5" rx="4.6" ry="5.2" transform="rotate(35 7 10.5)"/><ellipse cx="9.7" cy="8" rx="4.6" ry="5.2" transform="rotate(35 9.7 8)"/><ellipse cx="12.6" cy="5.5" rx="4.6" ry="5.2" transform="rotate(35 12.6 5.5)"/></g></svg><div class="abs" style="left:42.4px;top:583.4px;width:152.5px;height:88.5px;border:1px solid #dad9e0;border-radius:11px;background:#fdfcff"></div><svg class="abs" style="left:46.5px;top:587.4px" width="145" height="81" viewBox="0 0 145 81"><clipPath id="c4"><rect width="145" height="81" rx="8"/></clipPath><g clip-path="url(#c4)"><defs><linearGradient id="gr5" x1="0" y1="0" x2="0" y2="1"><stop offset="0" stop-color="#77b84c"/><stop offset="1" stop-color="#9acd78"/></linearGradient></defs><rect width="145" height="81" fill="#77b84c"/><rect y="64" width="145" height="17" fill="url(#gr5)"/><text x="9" y="13.5" font-size="5" fill="#f2f8ec" font-family="Liberation Sans" font-weight="bold" textLength="20" lengthAdjust="spacingAndGlyphs">History</text><text x="9" y="22.5" font-size="2.6" fill="#f2f8ec" opacity="1" font-family="Liberation Sans" font-weight="bold" textLength="127" lengthAdjust="spacingAndGlyphs">Role the significance of Asian Pacific Heritage Month and why we celebrate the history of culture</text><text x="9" y="25.1" font-size="2.6" fill="#f2f8ec" opacity="1" font-family="Liberation Sans" font-weight="bold" textLength="17" lengthAdjust="spacingAndGlyphs">ance of Asian</text><text x="14.0" y="33" font-size="2.0" fill="#eef6e8" opacity="1" font-family="Liberation Sans" font-weight="bold" textLength="10" lengthAdjust="spacingAndGlyphs">Role the s</text><text x="14.0" y="40" font-size="2.0" fill="#eef6e8" opacity="1" font-family="Liberation Sans" font-weight="bold" textLength="8" lengthAdjust="spacingAndGlyphs">ance of </text><text x="14.0" y="47" font-size="2.0" fill="#eef6e8" opacity="1" font-family="Liberation Sans" font-weight="bold" textLength="13" lengthAdjust="spacingAndGlyphs">ific Heritage</text><text x="35.5" y="33" font-size="2.0" fill="#eef6e8" opacity="1" font-family="Liberation Sans" font-weight="bold" textLength="10" lengthAdjust="spacingAndGlyphs">Role the s</text><text x="35.5" y="40" font-size="2.0" fill="#eef6e8" opacity="1" font-family="Liberation Sans" font-weight="bold" textLength="8" lengthAdjust="spacingAndGlyphs">ance of </text><text x="35.5" y="47" font-size="2.0" fill="#eef6e8" opacity="1" font-family="Liberation Sans" font-weight="bold" textLength="13" lengthAdjust="spacingAndGlyphs">ific Heritage</text><text x="57.0" y="33" font-size="2.0" fill="#eef6e8" opacity="1" font-family="Liberation Sans" font-weight="bold" textLength="10" lengthAdjust="spacingAndGlyphs">Role the s</text><text x="57.0" y="40" font-size="2.0" fill="#eef6e8" opacity="1" font-family="Liberation Sans" font-weight="bold" textLength="8" lengthAdjust="spacingAndGlyphs">ance of </text><text x="57.0" y="47" font-size="2.0" fill="#eef6e8" opacity="1" font-family="Liberation Sans" font-weight="bold" textLength="13" lengthAdjust="spacingAndGlyphs">ific Heritage</text><text x="78.5" y="33" font-size="2.0" fill="#eef6e8" opacity="1" font-family="Liberation Sans" font-weight="bold" textLength="10" lengthAdjust="spacingAndGlyphs">Role the s</text><text x="78.5" y="40" font-size="2.0" fill="#eef6e8" opacity="1" font-family="Liberation Sans" font-weight="bold" textLength="8" lengthAdjust="spacingAndGlyphs">ance of </text><text x="78.5" y="47" font-size="2.0" fill="#eef6e8" opacity="1" font-family="Liberation Sans" font-weight="bold" textLength="13" lengthAdjust="spacingAndGlyphs">ific Heritage</text><text x="100.0" y="33" font-size="2.0" fill="#eef6e8" opacity="1" font-family="Liberation Sans" font-weight="bold" textLength="10" lengthAdjust="spacingAndGlyphs">Role the s</text><text x="100.0" y="40" font-size="2.0" fill="#eef6e8" opacity="1" font-family="Liberation Sans" font-weight="bold" textLength="8" lengthAdjust="spacingAndGlyphs">ance of </text><text x="100.0" y="47" font-size="2.0" fill="#eef6e8" opacity="1" font-family="Liberation Sans" font-weight="bold" textLength="13" lengthAdjust="spacingAndGlyphs">ific Heritage</text><text x="121.5" y="33" font-size="2.0" fill="#eef6e8" opacity="1" font-family="Liberation Sans" font-weight="bold" textLength="10" lengthAdjust="spacingAndGlyphs">Role the s</text><text x="121.5" y="40" font-size="2.0" fill="#eef6e8" opacity="1" font-family="Liberation Sans" font-weight="bold" textLength="8" lengthAdjust="spacingAndGlyphs">ance of </text><text x="121.5" y="47" font-size="2.0" fill="#eef6e8" opacity="1" font-family="Liberation Sans" font-weight="bold" textLength="13" lengthAdjust="spacingAndGlyphs">ific Heritage</text></g></svg><div class="abs num" style="top:688.5px">6</div><svg class="abs" style="left:13px;top:711.9px" width="20" height="18" viewBox="0 0 20 18"><g fill="none" stroke="#3c3c3c" stroke-width="1.3"><ellipse cx="7" cy="10.5" rx="4.6" ry="5.2" transform="rotate(35 7 10.5)"/><ellipse cx="9.7" cy="8" rx="4.6" ry="5.2" transform="rotate(35 9.7 8)"/><ellipse cx="12.6" cy="5.5" rx="4.6" ry="5.2" transform="rotate(35 12.6 5.5)"/></g></svg><div class="abs" style="left:42.4px;top:685.4px;width:152.5px;height:88.5px;border:1px solid #dad9e0;border-radius:11px;background:#fdfcff"></div><svg class="abs" style="left:46.5px;top:689.4px" width="145" height="81" viewBox="0 0 145 81"><clipPath id="c5"><rect width="145" height="81" rx="8"/></clipPath><g clip-path="url(#c5)"><rect width="145" height="81" fill="#fffefd"/><g transform="rotate(5 20 40)" fill="none" stroke="#a9c8d6" stroke-width="0.5" stroke-dasharray="0.6 0.7"><ellipse cx="20" cy="40" rx="14" ry="17"/><path d="M20,23V57M8.799999999999999,34.9L20,40L31.200000000000003,34.9M8.799999999999999,45.1L20,50.2L31.200000000000003,45.1"/></g><g transform="translate(6,23) rotate(75)" stroke="#e07a44" fill="none" stroke-width="0.6"><ellipse cx="0" cy="0" rx="19" ry="6"/><path d="M-19,0H19"/><path d="M-14.2,0L-10.4,-4.9M-14.2,0L-10.4,4.9M-9.5,0L-5.7,-5.6M-9.5,0L-5.7,5.6M-4.8,0L-0.9,-5.8M-4.8,0L-0.9,5.8M0.0,0L3.8,-5.7M0.0,0L3.8,5.7M4.8,0L8.6,-5.2M4.8,0L8.6,5.2M9.5,0L13.3,-4.2M9.5,0L13.3,4.2M14.2,0L18.1,-1.8M14.2,0L18.1,1.8"/></g><g transform="translate(25,12) rotate(-30)" stroke="#7cc04a" fill="none" stroke-width="0.6"><ellipse cx="0" cy="0" rx="22" ry="8"/><path d="M-22,0H22"/><path d="M-17.6,0L-13.2,-6.2M-17.6,0L-13.2,6.2M-13.2,0L-8.8,-7.1M-13.2,0L-8.8,7.1M-8.8,0L-4.4,-7.6M-8.8,0L-4.4,7.6M-4.4,0L0.0,-7.8M-4.4,0L0.0,7.8M0.0,0L4.4,-7.6M0.0,0L4.4,7.6M4.4,0L8.8,-7.1M4.4,0L8.8,7.1M8.8,0L13.2,-6.2M8.8,0L13.2,6.2M13.2,0L17.6,-4.7M13.2,0L17.6,4.7M17.6,0L22.0,-0.0M17.6,0L22.0,0.0"/></g><g transform="translate(17,69) rotate(25)" stroke="#e8904e" fill="none" stroke-width="0.6"><ellipse cx="0" cy="0" rx="20" ry="12"/><path d="M-20,0H20"/><path d="M-16.0,0L-12.0,-9.3M-16.0,0L-12.0,9.3M-12.0,0L-8.0,-10.7M-12.0,0L-8.0,10.7M-8.0,0L-4.0,-11.4M-8.0,0L-4.0,11.4M-4.0,0L0.0,-11.6M-4.0,0L0.0,11.6M0.0,0L4.0,-11.4M0.0,0L4.0,11.4M4.0,0L8.0,-10.7M4.0,0L8.0,10.7M8.0,0L12.0,-9.3M8.0,0L12.0,9.3M12.0,0L16.0,-7.0M12.0,0L16.0,7.0M16.0,0L20.0,-0.0M16.0,0L20.0,0.0"/></g><text x="54" y="15.4" font-size="5.4" fill="#e0652c" font-family="Liberation Sans" font-weight="bold" textLength="41" lengthAdjust="spacingAndGlyphs">Interesting facts</text><text x="54" y="26.0" font-size="2.6" fill="#6d5a52" opacity="1" font-family="Liberation Sans" font-weight="bold" textLength="84" lengthAdjust="spacingAndGlyphs">Role the significance of Asian Pacific Heritage Month and why we</text><text x="54" y="28.8" font-size="2.6" fill="#6d5a52" opacity="1" font-family="Liberation Sans" font-weight="bold" textLength="18" lengthAdjust="spacingAndGlyphs">ance of Asian</text><text x="58" y="33.5" font-size="2.3" fill="#a5857a" opacity="1" font-family="Liberation Sans" font-weight="bold" textLength="78" lengthAdjust="spacingAndGlyphs">Role the significance of Asian Pacific Heritage Month and why we ce</text><text x="58" y="36.3" font-size="2.3" fill="#a5857a" opacity="1" font-family="Liberation Sans" font-weight="bold" textLength="40" lengthAdjust="spacingAndGlyphs">ance of Asian Pacific Heritage Mon</text><text x="58" y="39.1" font-size="2.3" fill="#a5857a" opacity="1" font-family="Liberation Sans" font-weight="bold" textLength="78" lengthAdjust="spacingAndGlyphs">ific Heritage Month and why we celebrate the history of culture peo</text><text x="58" y="41.9" font-size="2.3" fill="#a5857a" opacity="1" font-family="Liberation Sans" font-weight="bold" textLength="78" lengthAdjust="spacingAndGlyphs">gnificance of Asian Pacific Heritage Month and why we celebrate the</text><text x="58" y="44.7" font-size="2.3" fill="#a5857a" opacity="1" font-family="Liberation Sans" font-weight="bold" textLength="76" lengthAdjust="spacingAndGlyphs">an Pacific Heritage Month and why we celebrate the history of cult</text><text x="58" y="47.5" font-size="2.3" fill="#a5857a" opacity="1" font-family="Liberation Sans" font-weight="bold" textLength="20" lengthAdjust="spacingAndGlyphs">the significance </text><text x="58" y="50.3" font-size="2.3" fill="#a5857a" opacity="1" font-family="Liberation Sans" font-weight="bold" textLength="76" lengthAdjust="spacingAndGlyphs">of Asian Pacific Heritage Month and why we celebrate the history o</text><text x="58" y="53.099999999999994" font-size="2.3" fill="#a5857a" opacity="1" font-family="Liberation Sans" font-weight="bold" textLength="52" lengthAdjust="spacingAndGlyphs">Heritage Month and why we celebrate the histo</text></g></svg><div class="abs num" style="top:790.4px">7</div><svg class="abs" style="left:13px;top:813.8px" width="20" height="18" viewBox="0 0 20 18"><g fill="none" stroke="#3c3c3c" stroke-width="1.3"><ellipse cx="7" cy="10.5" rx="4.6" ry="5.2" transform="rotate(35 7 10.5)"/><ellipse cx="9.7" cy="8" rx="4.6" ry="5.2" transform="rotate(35 9.7 8)"/><ellipse cx="12.6" cy="5.5" rx="4.6" ry="5.2" transform="rotate(35 12.6 5.5)"/></g></svg><div class="abs" style="left:42.4px;top:787.3px;width:152.5px;height:88.5px;border:1px solid #dad9e0;border-radius:11px;background:#fdfcff"></div><svg class="abs" style="left:46.5px;top:791.3px" width="145" height="81" viewBox="0 0 145 81"><clipPath id="c6"><rect width="145" height="81" rx="8"/></clipPath><g clip-path="url(#c6)"><rect width="145" height="81" fill="#62a3c9"/><text x="10" y="13.5" font-size="5" fill="#f4f8fb" font-family="Liberation Sans" font-weight="bold" textLength="28" lengthAdjust="spacingAndGlyphs">Key people</text><text x="10" y="23.0" font-size="2.6" fill="#eef5fa" opacity="1" font-family="Liberation Sans" font-weight="bold" textLength="126" lengthAdjust="spacingAndGlyphs">Role the significance of Asian Pacific Heritage Month and why we celebrate the history of cultur</text><text x="10" y="25.8" font-size="2.6" fill="#eef5fa" opacity="1" font-family="Liberation Sans" font-weight="bold" textLength="56" lengthAdjust="spacingAndGlyphs">ance of Asian Pacific Heritage Month and wh</text><rect x="17.7" y="36.6" width="18.6" height="19.5" fill="#3f80a7"/><text x="8.7" y="59" font-size="2.2" fill="#e4eff6" opacity="1" font-family="Liberation Sans" font-weight="bold" textLength="35" lengthAdjust="spacingAndGlyphs">Role the significance of Asian </text><text x="8.7" y="62" font-size="2.2" fill="#e4eff6" opacity="1" font-family="Liberation Sans" font-weight="bold" textLength="35" lengthAdjust="spacingAndGlyphs">ance of Asian Pacific Heritage </text><text x="8.7" y="65" font-size="2.2" fill="#e4eff6" opacity="1" font-family="Liberation Sans" font-weight="bold" textLength="30" lengthAdjust="spacingAndGlyphs">ific Heritage Month and why</text><text x="8.7" y="68" font-size="2.2" fill="#e4eff6" opacity="1" font-family="Liberation Sans" font-weight="bold" textLength="32" lengthAdjust="spacingAndGlyphs">gnificance of Asian Pacific H</text><rect x="63.3" y="36.6" width="18.6" height="19.5" fill="#3f80a7"/><text x="54.3" y="59" font-size="2.2" fill="#e4eff6" opacity="1" font-family="Liberation Sans" font-weight="bold" textLength="35" lengthAdjust="spacingAndGlyphs">Role the significance of Asian </text><text x="54.3" y="62" font-size="2.2" fill="#e4eff6" opacity="1" font-family="Liberation Sans" font-weight="bold" textLength="35" lengthAdjust="spacingAndGlyphs">ance of Asian Pacific Heritage </text><text x="54.3" y="65" font-size="2.2" fill="#e4eff6" opacity="1" font-family="Liberation Sans" font-weight="bold" textLength="30" lengthAdjust="spacingAndGlyphs">ific Heritage Month and why</text><text x="54.3" y="68" font-size="2.2" fill="#e4eff6" opacity="1" font-family="Liberation Sans" font-weight="bold" textLength="32" lengthAdjust="spacingAndGlyphs">gnificance of Asian Pacific H</text><rect x="108" y="36.6" width="18.6" height="19.5" fill="#3f80a7"/><text x="99" y="59" font-size="2.2" fill="#e4eff6" opacity="1" font-family="Liberation Sans" font-weight="bold" textLength="35" lengthAdjust="spacingAndGlyphs">Role the significance of Asian </text><text x="99" y="62" font-size="2.2" fill="#e4eff6" opacity="1" font-family="Liberation Sans" font-weight="bold" textLength="35" lengthAdjust="spacingAndGlyphs">ance of Asian Pacific Heritage </text><text x="99" y="65" font-size="2.2" fill="#e4eff6" opacity="1" font-family="Liberation Sans" font-weight="bold" textLength="30" lengthAdjust="spacingAndGlyphs">ific Heritage Month and why</text><text x="99" y="68" font-size="2.2" fill="#e4eff6" opacity="1" font-family="Liberation Sans" font-weight="bold" textLength="32" lengthAdjust="spacingAndGlyphs">gnificance of Asian Pacific H</text></g></svg><div class="abs num" style="top:892.4px">8</div><svg class="abs" style="left:13px;top:915.8px" width="20" height="18" viewBox="0 0 20 18"><g fill="none" stroke="#3c3c3c" stroke-width="1.3"><ellipse cx="7" cy="10.5" rx="4.6" ry="5.2" transform="rotate(35 7 10.5)"/><ellipse cx="9.7" cy="8" rx="4.6" ry="5.2" transform="rotate(35 9.7 8)"/><ellipse cx="12.6" cy="5.5" rx="4.6" ry="5.2" transform="rotate(35 12.6 5.5)"/></g></svg><div class="abs" style="left:42.4px;top:889.2px;width:152.5px;height:88.5px;border:1px solid #dad9e0;border-radius:11px;background:#fdfcff"></div><svg class="abs" style="left:46.5px;top:893.2px" width="145" height="81" viewBox="0 0 145 81"><clipPath id="c7"><rect width="145" height="81" rx="8"/></clipPath><g clip-path="url(#c7)"><rect width="145" height="81" fill="#e0642c"/><text x="10" y="14.5" font-size="5" fill="#fbeee6" font-family="Liberation Sans" font-weight="bold" textLength="46" lengthAdjust="spacingAndGlyphs">Arts and literature</text><text x="10" y="24.0" font-size="2.6" fill="#fbe9df" opacity="1" font-family="Liberation Sans" font-weight="bold" textLength="62" lengthAdjust="spacingAndGlyphs">Role the significance of Asian Pacific Heritage</text><text x="10" y="26.6" font-size="2.6" fill="#fbe9df" opacity="1" font-family="Liberation Sans" font-weight="bold" textLength="62" lengthAdjust="spacingAndGlyphs">ance of Asian Pacific Heritage Month and why we</text><text x="10" y="29.2" font-size="2.6" fill="#fbe9df" opacity="1" font-family="Liberation Sans" font-weight="bold" textLength="32" lengthAdjust="spacingAndGlyphs">ific Heritage Month and </text><text x="12" y="34.5" font-size="2.4" fill="#f7dc7a" opacity="1" font-family="Liberation Sans" font-weight="bold" textLength="26" lengthAdjust="spacingAndGlyphs">Role the significance</text><text x="12" y="37.7" font-size="2.4" fill="#f7dc7a" opacity="1" font-family="Liberation Sans" font-weight="bold" textLength="26" lengthAdjust="spacingAndGlyphs">ance of Asian Pacific</text><text x="12" y="40.9" font-size="2.4" fill="#f7dc7a" opacity="1" font-family="Liberation Sans" font-weight="bold" textLength="26" lengthAdjust="spacingAndGlyphs">ific Heritage Month a</text><rect x="81" y="8.8" width="55" height="28.6" fill="#b94b21"/><rect x="81" y="41.6" width="55" height="28.6" fill="#b94b21"/></g></svg><div class="abs num" style="top:994.3px">9</div><svg class="abs" style="left:13px;top:1017.7px" width="20" height="18" viewBox="0 0 20 18"><g fill="none" stroke="#3c3c3c" stroke-width="1.3"><ellipse cx="7" cy="10.5" rx="4.6" ry="5.2" transform="rotate(35 7 10.5)"/><ellipse cx="9.7" cy="8" rx="4.6" ry="5.2" transform="rotate(35 9.7 8)"/><ellipse cx="12.6" cy="5.5" rx="4.6" ry="5.2" transform="rotate(35 12.6 5.5)"/></g></svg><div class="abs" style="left:42.4px;top:991.2px;width:152.5px;height:88.5px;border:1px solid #dad9e0;border-radius:11px;background:#fdfcff"></div><svg class="abs" style="left:46.5px;top:995.2px" width="145" height="81" viewBox="0 0 145 81"><clipPath id="c8"><rect width="145" height="81" rx="8"/></clipPath><g clip-path="url(#c8)"><rect width="145" height="81" fill="#fffefd"/><text x="12" y="15" font-size="5.2" fill="#e0652c" font-family="Liberation Sans" font-weight="bold" textLength="47" lengthAdjust="spacingAndGlyphs">How we celebrate</text><text x="12" y="27.0" font-size="2.6" fill="#6d5a52" opacity="1" font-family="Liberation Sans" font-weight="bold" textLength="70" lengthAdjust="spacingAndGlyphs">Role the significance of Asian Pacific Heritage Month</text><text x="12" y="29.7" font-size="2.6" fill="#6d5a52" opacity="1" font-family="Liberation Sans" font-weight="bold" textLength="36" lengthAdjust="spacingAndGlyphs">ance of Asian Pacific Herit</text><rect x="18" y="34" width="52" height="2.8" fill="#e3f3a6"/><rect x="18" y="37.5" width="44" height="2.8" fill="#e3f3a6"/><text x="18" y="36.3" font-size="2.3" fill="#9aa85a" opacity="1" font-family="Liberation Sans" font-weight="bold" textLength="52" lengthAdjust="spacingAndGlyphs">Role the significance of Asian Pacific Herita</text><text x="18" y="39.699999999999996" font-size="2.3" fill="#9aa85a" opacity="1" font-family="Liberation Sans" font-weight="bold" textLength="44" lengthAdjust="spacingAndGlyphs">ance of Asian Pacific Heritage Month a</text><g stroke="#9fd3c9" stroke-width="0.8" fill="none"><path d="M123,-1Q113,30 109.5,82"/><path d="M131.5,-1V82M134.7,-1V82"/><path d="M121,1L131,21M115,13.5L131,35M111,25L130,39M109,37L130,55"/><path d="M134.7,22L144.7,9.5M134.7,35L144.7,21M134.7,48L144.7,34"/></g></g></svg></div></div>
<div class="abs" style="left:207px;top:159px;width:8px;height:617px;border-radius:4px;background:#d7d6dd"></div>
<div id="slide" class="abs"><svg width="1437" height="808" style="position:absolute;left:0;top:0"><g transform="translate(-360,-192)"><ellipse cx="775" cy="1042" rx="400" ry="250" fill="#bfe1dc" fill-opacity="0.28" stroke="#c2e3de" stroke-width="8" stroke-opacity="0.55"/></g></svg></div>
<div id="title" class="abs">Geography</div>
<div class="abs body" style="top:424px">The vast continent of Asia unfurls a</div>
<div class="abs body" style="top:454px">nations. From the towering Himalay</div>
<div class="abs body" style="top:484px">and seascapes come alive.</div>
<div class="abs body" style="top:424px;left:1282px">borders outlining a tapestry of</div>
<div class="abs body" style="top:454px;left:1272px">Southeast Asia, mountains, rivers,</div>
<div id="mapbox" class="abs"></div>
<svg class="abs" style="left:0;top:0" width="1920" height="1041"><g fill="#7f0000"><path fill-rule="evenodd" d="M883.0,588.0 L890.0,582.0 L899.0,580.0 L912.0,579.0 L923.0,575.0 L928.0,577.0 L939.0,581.0 L947.0,584.0 L951.0,586.0 L948.5,593.0 L954.0,598.0 L963.0,597.0 L961.0,588.5 L957.0,580.0 L951.0,571.0 L954.0,565.0 L943.0,565.0 L939.0,557.0 L945.0,551.0 L953.0,546.0 L963.0,548.5 L967.0,545.0 L966.0,537.0 L958.5,537.0 L957.0,533.0 L961.0,529.0 L959.0,520.0 L956.0,510.0 L952.5,500.0 L955.0,492.0 L956.7,481.0 L965.0,482.0 L973.0,498.0 L977.5,494.0 L986.7,497.0 L980.0,479.0 L991.7,478.0 L988.0,475.0 L1000.0,473.0 L1013.0,469.0 L1023.0,470.0 L1042.5,474.0 L1036.0,480.0 L1061.0,480.0 L1082.0,481.0 L1097.0,485.5 L1109.6,482.1 L1126.0,483.0 L1143.2,486.9 L1162.4,488.8 L1165.3,490.7 L1183.6,489.8 L1191.3,492.7 L1196.0,490.7 L1209.5,491.2 L1239.8,512.4 L1228.7,515.7 L1227.8,520.5 L1213.4,521.5 L1224.0,531.0 L1226.8,537.0 L1224.9,543.6 L1224.0,555.0 L1220.0,549.3 L1204.7,529.2 L1205.7,517.6 L1202.8,512.4 L1200.9,516.7 L1189.3,515.2 L1189.3,522.4 L1162.4,522.9 L1157.6,535.9 L1167.2,538.8 L1176.8,539.7 L1185.7,555.7 L1186.6,565.3 L1183.7,575.0 L1174.0,578.7 L1170.3,584.5 L1176.0,596.0 L1183.7,601.8 L1178.0,607.5 L1172.2,600.0 L1162.6,590.2 L1155.0,586.4 L1145.3,592.2 L1156.8,598.0 L1158.8,604.0 L1166.5,615.4 L1168.4,627.0 L1164.5,638.4 L1156.8,646.0 L1143.4,650.0 L1131.9,655.7 L1130.0,663.4 L1137.6,671.0 L1141.5,680.7 L1137.6,688.4 L1130.0,696.0 L1124.2,690.3 L1116.5,684.5 L1111.7,680.7 L1109.0,692.0 L1118.4,705.7 L1126.0,719.0 L1122.3,721.0 L1112.7,707.6 L1106.0,694.0 L1106.9,676.8 L1095.4,669.2 L1083.8,650.0 L1072.0,652.0 L1064.4,661.5 L1053.0,673.0 L1051.0,686.5 L1045.2,698.0 L1039.5,682.6 L1029.9,661.5 L1028.0,652.0 L1022.2,653.8 L1018.3,648.0 L1006.8,638.4 L991.4,639.4 L978.0,634.6 L964.5,634.6 L958.8,628.8 L951.0,623.0 L960.7,636.5 L970.3,641.3 L976.0,638.4 L987.6,648.0 L980.0,661.5 L964.5,671.0 L941.5,681.7 L937.6,671.0 L926.0,650.0 L910.7,628.8 L903.0,617.3 L910.7,613.0 L910.7,600.0 L905.0,600.0 L891.5,598.0 L883.0,592.0ZM970.0,564.0 L976.0,563.0 L978.5,569.0 L975.0,575.0 L971.0,574.0ZM983.0,460.0 L990.0,459.5 L1003.0,463.0 L1010.0,465.0 L1014.0,466.0 L1013.0,468.0 L1004.0,467.0 L995.0,465.0 L984.0,462.0ZM1090.0,472.0 L1100.0,473.0 L1120.0,475.0 L1119.0,477.0 L1100.0,476.0 L1091.0,474.0ZM1177.0,538.0 L1182.0,542.0 L1192.0,556.0 L1199.0,565.0 L1197.0,566.0 L1188.0,555.0 L1178.0,541.0ZM1199.0,569.0 L1210.0,572.0 L1218.0,567.0 L1214.0,578.0 L1206.0,581.0 L1201.0,577.0ZM1205.0,583.0 L1211.0,588.0 L1215.0,601.0 L1208.0,606.0 L1197.0,610.0 L1192.0,616.0 L1190.0,612.0 L1187.0,609.0 L1196.0,604.0 L1203.0,600.0 L1208.0,592.0ZM1169.0,639.0 L1172.0,640.0 L1173.0,648.0 L1170.0,650.0 L1169.0,645.0ZM1137.0,657.0 L1141.0,658.0 L1141.0,662.0 L1137.0,663.0 L1136.0,660.0ZM1052.0,692.0 L1057.0,697.0 L1059.6,704.0 L1055.0,706.0 L1052.0,700.0ZM1101.0,707.6 L1108.0,710.0 L1116.0,716.0 L1126.0,728.0 L1134.0,740.0 L1134.5,746.0 L1130.0,745.0 L1120.0,733.0 L1110.0,720.0 L1102.0,711.0ZM1131.0,748.0 L1145.0,750.0 L1160.0,753.0 L1161.0,757.0 L1148.0,756.0 L1135.0,753.0ZM1162.0,755.0 L1176.0,756.0 L1175.0,758.0 L1163.0,757.0ZM1183.0,761.0 L1196.0,755.0 L1197.0,757.0 L1186.0,765.0ZM1143.4,722.0 L1152.0,716.0 L1163.0,709.0 L1168.0,703.0 L1174.0,707.0 L1172.0,715.0 L1173.0,722.0 L1167.0,732.0 L1163.0,740.0 L1152.0,738.0 L1145.0,732.0ZM1176.0,723.0 L1186.0,722.0 L1192.0,720.0 L1189.0,725.0 L1182.0,727.0 L1186.0,731.0 L1184.0,734.0 L1180.0,732.0 L1185.0,745.0 L1181.0,748.0 L1177.0,740.0 L1176.0,748.0 L1174.0,745.0 L1175.0,735.0ZM1173.0,663.0 L1178.0,663.0 L1180.0,670.0 L1178.0,676.0 L1183.0,680.0 L1180.0,684.0 L1174.0,676.0 L1172.0,670.0ZM1183.0,683.0 L1189.0,687.0 L1190.0,694.0 L1192.0,698.0 L1195.0,706.0 L1190.0,705.0 L1186.0,700.0 L1182.0,693.0ZM1170.0,695.0 L1173.0,691.0 L1172.0,698.0 L1168.0,703.0ZM1199.0,719.0 L1203.0,719.0 L1202.0,730.0 L1199.0,730.0ZM1196.0,736.0 L1210.0,737.0 L1209.0,741.0 L1197.0,740.0ZM1209.0,752.0 L1213.0,746.0 L1214.0,750.0 L1211.0,755.0ZM1225.0,748.0 L1221.0,755.0 L1223.0,756.0 L1227.0,749.0ZM902.0,603.0 L907.0,602.5 L906.0,605.0 L902.0,605.0ZM1238.0,539.0 L1240.0,539.0 L1240.0,540.0 L1238.0,540.0ZM1260.0,545.0 L1263.0,545.0 L1263.0,546.0 L1260.0,546.0Z"/></g></svg>

<div class="abs" style="left:1598px;top:63px;font-size:15px;color:#1f1f1f;white-space:nowrap">Slideshow</div>
<div class="abs" style="left:1771px;top:63px;font-size:15px;color:#1f1f1f;white-space:nowrap">Share</div>
<svg class="abs" style="left:0;top:0" width="1920" height="1041">
<path d="M856,446.5H870V449.8H864.6V468.2H870V471.5H856V468.2H861.4V449.8H856Z" fill="#e3ea70" stroke="#000" stroke-width="1.4" stroke-linejoin="miter"/>
<path d="M1046,1022H1094" stroke="#5f5f68" stroke-width="2"/>
</svg>
</body></html>
